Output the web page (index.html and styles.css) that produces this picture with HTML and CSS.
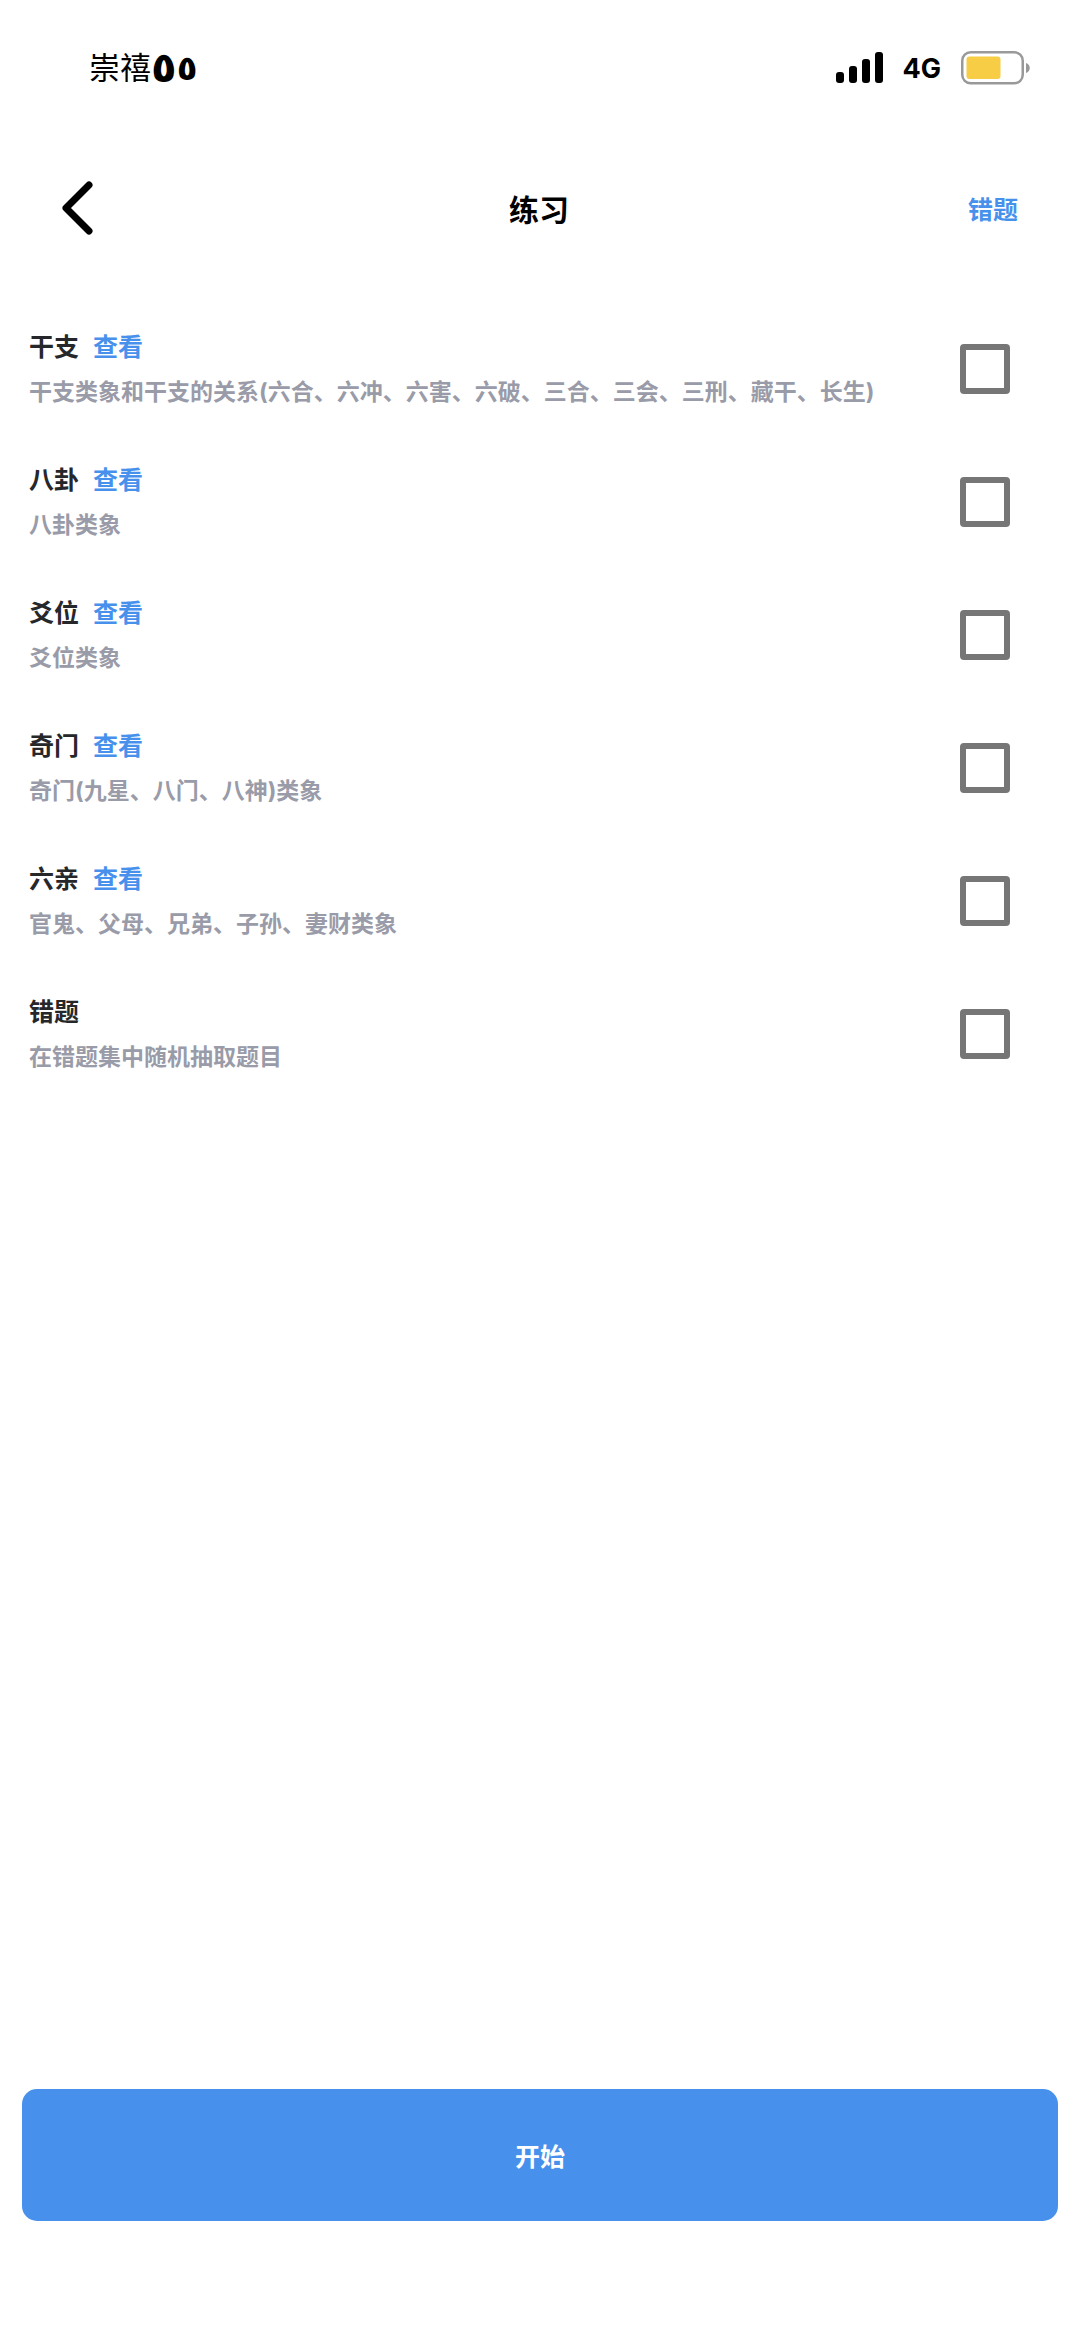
FILE: index.html
```html
<!DOCTYPE html>
<html lang="zh-Hans">
<head>
  <meta charset="UTF-8">
  <meta name="viewport" content="width=device-width, initial-scale=1">
  <title>练习</title>
  <link rel="stylesheet" href="styles.css">
</head>
<body>
  <div class="status-bar">
    <div class="carrier">崇禧<span class="mark mark-large">٥</span><span class="mark">٥</span></div>
    <div class="status-icons">
      <svg class="signal" width="48" height="32" viewBox="0 0 48 32">
        <rect x="0" y="20" width="8" height="11" rx="3"/>
        <rect x="13" y="14" width="8" height="17" rx="3"/>
        <rect x="26" y="7" width="8" height="24" rx="3"/>
        <rect x="39" y="0" width="8" height="31" rx="3"/>
      </svg>
      <span class="network">4G</span>
      <svg class="battery" width="70" height="34" viewBox="0 0 70 34">
        <rect x="1.25" y="1.25" width="60.5" height="31" rx="8.5" fill="none" stroke="#999" stroke-width="2.5"/>
        <rect x="5.5" y="5.5" width="34" height="22.5" rx="3" fill="#f6cd45"/>
        <path d="M65 12c5 1.500 5 8.500 0 10z" fill="#999"/>
      </svg>
    </div>
  </div>

  <header class="navbar">
    <button class="back" type="button" aria-label="返回">
      <svg width="34" height="54" viewBox="0 0 34 54">
        <path d="M29 4L6 27l23 23" fill="none" stroke="#000" stroke-width="7" stroke-linecap="round" stroke-linejoin="round"/>
      </svg>
    </button>
    <h1>练习</h1>
    <a class="nav-link" href="#">错题</a>
  </header>

  <main class="list">
    <div class="item">
      <div class="item-text">
        <div class="item-title"><label for="ganzhi">干支</label><a href="#">查看</a></div>
        <p>干支类象和干支的关系(六合、六冲、六害、六破、三合、三会、三刑、藏干、长生)</p>
      </div>
      <input type="checkbox" id="ganzhi">
    </div>
    <div class="item">
      <div class="item-text">
        <div class="item-title"><label for="bagua">八卦</label><a href="#">查看</a></div>
        <p>八卦类象</p>
      </div>
      <input type="checkbox" id="bagua">
    </div>
    <div class="item">
      <div class="item-text">
        <div class="item-title"><label for="yaowei">爻位</label><a href="#">查看</a></div>
        <p>爻位类象</p>
      </div>
      <input type="checkbox" id="yaowei">
    </div>
    <div class="item">
      <div class="item-text">
        <div class="item-title"><label for="qimen">奇门</label><a href="#">查看</a></div>
        <p>奇门(九星、八门、八神)类象</p>
      </div>
      <input type="checkbox" id="qimen">
    </div>
    <div class="item">
      <div class="item-text">
        <div class="item-title"><label for="liuqin">六亲</label><a href="#">查看</a></div>
        <p>官鬼、父母、兄弟、子孙、妻财类象</p>
      </div>
      <input type="checkbox" id="liuqin">
    </div>
    <div class="item">
      <div class="item-text">
        <div class="item-title"><label for="cuoti">错题</label></div>
        <p>在错题集中随机抽取题目</p>
      </div>
      <input type="checkbox" id="cuoti">
    </div>
  </main>

  <footer class="footer">
    <button class="start" type="button">开始</button>
  </footer>
</body>
</html>
```

FILE: styles.css
```css
* { box-sizing: border-box; }
body {
  margin: 0;
  min-height: 100vh;
  display: flex;
  flex-direction: column;
  background: #fff;
  color: #26272b;
  font-family: Inter, "Noto Sans CJK SC", sans-serif;
  font-size: 25px;
  font-weight: bold;
}
a { color: #4791ed; text-decoration: none; }
button { font: inherit; border: 0; cursor: pointer; }

.status-bar {
  display: flex;
  justify-content: space-between;
  align-items: center;
  height: 136px;
  padding: 0 49px 0 89px;
  color: #000;
}
.carrier {
  display: flex;
  align-items: center;
  height: 40px;
  font-size: 31px;
  font-weight: normal;
  line-height: 40px;
}
.mark {
  font-family: "DejaVu Sans", sans-serif;
  font-size: 34px;
  font-weight: bold;
}
.mark-large { font-size: 42px; }
.status-icons { display: flex; align-items: center; }
.network { margin: 0 20px 0 18px; font-size: 27px; }

.navbar {
  display: grid;
  grid-template-columns: 1fr auto 1fr;
  align-items: center;
  height: 144px;
  padding: 0 62px 0 60px;
}
.navbar h1 { margin: 0; font-size: 30px; color: #000; }
.back {
  justify-self: start;
  display: flex;
  padding: 0;
  background: none;
}
.nav-link { justify-self: end; }

.list { flex: 1; padding-top: 22px; }
.item {
  display: flex;
  justify-content: space-between;
  align-items: center;
  height: 133px;
  padding: 0 70px 0 29px;
}
.item-title {
  display: flex;
  gap: 14px;
  line-height: 46px;
}
.item p {
  margin: 0;
  font-size: 23px;
  line-height: 44px;
  color: #999ba8;
}
.item input {
  appearance: none;
  flex: none;
  width: 50px;
  height: 50px;
  margin: 0;
  border: 6px solid #767676;
  border-radius: 4px;
  background: #fff;
}
.item input:checked { background: #4791ed; }

.footer { padding: 0 22px 116px; }
.start {
  width: 100%;
  height: 132px;
  border-radius: 15px;
  background: #4791ed;
  color: #fff;
}
```
